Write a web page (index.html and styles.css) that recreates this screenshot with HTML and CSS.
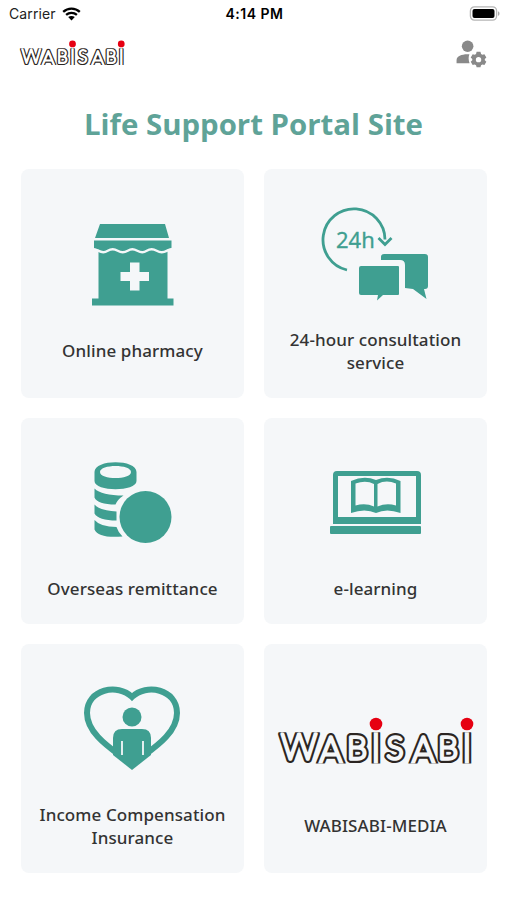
FILE: index.html
```html
<!DOCTYPE html>
<html lang="en">
<head>
<meta charset="utf-8">
<meta name="viewport" content="width=device-width">
<title>Life Support Portal Site</title>
<link rel="stylesheet" href="styles.css">
</head>
<body>
<div class="status">
  <div class="carrier"><span>Carrier</span>
    <svg width="19" height="14" viewBox="0 0 19 14"><path d="M1.2 4.9C5.8.6 13.2.6 17.8 4.9M4.1 7.9c3.1-2.8 7.7-2.8 10.8 0" fill="none" stroke="#000" stroke-width="2.3"/><path d="M6.2 10.1c1.9-1.6 4.7-1.6 6.6 0L9.5 13.5z"/></svg>
  </div>
  <div class="time">4:14 PM</div>
  <svg class="battery" width="31" height="16" viewBox="0 0 31 16"><rect x="1.4" y=".9" width="26.2" height="13.2" rx="4" fill="none" stroke="#b5b5b5" stroke-width="1.3"/><rect x="3.5" y="3" width="22" height="9" rx="2"/><path d="M29 5.2c2 .8 2 3.8 0 4.6z" fill="#aaa"/></svg>
</div>
<header class="header">
  <svg class="logo" width="105" height="26" viewBox="0 0 196 48">
    <clipPath id="band"><rect x="-5" y="15.300" width="206" height="31.200"/></clipPath>
    <g class="wordmark" clip-path="url(#band)">
      <text class="outer" x="3 41 69 92.300 108.500 133.500 160 183.300" y="42 46.500 42 48 42 46.500 42 48"><tspan class="w">W</tspan><tspan class="a">A</tspan>B<tspan class="i">I</tspan>S<tspan class="a">A</tspan>B<tspan class="i">I</tspan></text>
      <text class="inner header-inner" aria-hidden="true" x="3 41 69 92.300 108.500 133.500 160 183.300" y="42 46.500 42 48 42 46.500 42 48"><tspan class="w">W</tspan><tspan class="a">A</tspan>B<tspan class="i">I</tspan>S<tspan class="a">A</tspan>B<tspan class="i">I</tspan></text>
    </g>
    <circle cx="98" cy="7" r="6.3" fill="#e60012"/><circle cx="189" cy="7" r="6.3" fill="#e60012"/>
  </svg>
  <svg class="settings" width="31" height="27" viewBox="0 0 32 28" fill="#898989"><circle cx="12" cy="6.5" r="6"/><path d="M.5 24v-3.1c0-3.8 5.3-6 11-6h2.3c-1.1 3-1 6 .2 9.1z"/><path fill-rule="evenodd" d="m21.3 12.3h4l.6 2.2 1.4.8 2.1-.6 2 3.4-1.6 1.5v1.5l1.6 1.5-2 3.4-2.1-.6-1.4.8-.6 2.1h-4l-.6-2.1-1.4-.8-2.1.6-2-3.4 1.6-1.5v-1.5l-1.6-1.5 2-3.4 2.1.6 1.4-.8zm2 5.3a2.8 2.8 0 1 0 0 5.6 2.8 2.8 0 0 0 0-5.6"/></svg>
</header>
<main>
  <h1>Life Support Portal Site</h1>
  <div class="grid">
    <section class="card">
      <svg class="icon" width="100" height="100" viewBox="1 -3 100 100"><path d="M18 6h65l4 14H13zM12 22.500h77.500v9H85.500V80.500h6V87.500H10V80.500h6.500V31.500H12z"/><path class="wave" d="M10.500 31C15 31 17 34.300 21.300 34.300S26 31.300 30.700 31.300 36 34.300 40.700 34.300 46 31.300 50.300 31.300 56 34.300 60.300 34.300 65 31.300 69.700 31.300 75 34.300 79.700 34.300 86 31 90.500 31"/><path class="cut" d="M48 44.500h9.500v9.500h9.500v9h-9.500v9.500H48V63h-9.500v-9H48z"/></svg>
      <p>Online pharmacy</p>
    </section>
    <section class="card">
      <svg class="icon" width="110" height="100" viewBox="10 5 110 100"><path d="M36 71A31 31 0 1 1 74 40.500M67.500 39l6.500 6.500 6.500-6.500" fill="none" stroke="#3f9f91" stroke-width="2.8"/><text class="hours" x="25" y="49">24h</text><path d="M50 67h37q1 0 1 1v27q0 1-1 1H72l-6 5.500 1-5.500H50q-2 0-2-2V69q0-2 2-2M70 60v-2q0-3 3-3h41q3 0 3 3v29q0 3-3 3h-1l2.500 10L102 90l-8-1V66q0-5-5-5H70z"/></svg>
      <p>24-hour consultation<br>service</p>
    </section>
    <section class="card">
      <svg class="icon" width="100" height="100" viewBox=".5 3 100 100"><path fill-rule="evenodd" d="M12 22c0-13 42-13 42 0v9c0 11-42 11-42 0zm5.500 0c0 8 31 8 31 0s-31-8-31 0M12 38.500q7 7 29 7-6 4-8 9-18 0-21-7zM12 54.500q5 6 22 7v9q-18 0-22-7zM12 70q6 7 22 7 2 6 6 9.500-24 2-28-7z"/><circle cx="63" cy="67" r="26"/></svg>
      <p>Overseas remittance</p>
    </section>
    <section class="card">
      <svg class="icon" width="100" height="100" viewBox="0 3 100 100"><path fill-rule="evenodd" d="M11 21h80q4 0 4 4v49H7V25q0-4 4-4m1 5v41h78V26z"/><rect x="4" y="76" width="91" height="8" rx="1"/><path fill-rule="evenodd" d="M25 31q13-6 25-1 12-5 24.500 1v32q-14-5-24.500 0-11-5-25 0zm4.500 2.500v22q10-3 18.500 1V34q-8-4-18.500-.5m22 .5v22.500q9-4 18.500-1V33.500q-10-4-18.500.5"/></svg>
      <p>e-learning</p>
    </section>
    <section class="card">
      <svg class="icon" width="100" height="100" viewBox="1 0 100 100"><path d="M50 86C37 74 5 58 5 34 5 10 36 4 50 18 64 4 95 10 95 34 95 58 63 74 50 86z" fill="none" stroke="#3f9f91" stroke-width="6"/><circle cx="50" cy="38" r="9.500"/><path d="M31 76V59q0-9 9-9h20q9 0 9 9v17L50 91z"/><path d="M40 62v14M61 62v14" stroke="#f5f7f9" stroke-width="1.800"/></svg>
      <p>Income Compensation<br>Insurance</p>
    </section>
    <section class="card">
      <svg class="icon brand" width="196" height="100" viewBox="0 -27 196 100">
        <g class="wordmark" clip-path="url(#band)">
          <text class="outer" x="3 41 69 92.300 108.500 133.500 160 183.300" y="42 46.500 42 48 42 46.500 42 48"><tspan class="w">W</tspan><tspan class="a">A</tspan>B<tspan class="i">I</tspan>S<tspan class="a">A</tspan>B<tspan class="i">I</tspan></text>
          <text class="inner" aria-hidden="true" x="3 41 69 92.300 108.500 133.500 160 183.300" y="42 46.500 42 48 42 46.500 42 48"><tspan class="w">W</tspan><tspan class="a">A</tspan>B<tspan class="i">I</tspan>S<tspan class="a">A</tspan>B<tspan class="i">I</tspan></text>
        </g>
        <circle cx="98" cy="7" r="6.300" fill="#e60012"/><circle cx="189" cy="7" r="6.300" fill="#e60012"/>
      </svg>
      <p>WABISABI-MEDIA</p>
    </section>
  </div>
</main>
</body>
</html>
```
FILE: styles.css
```css
* { box-sizing: border-box; }
body { margin: 0; height: 900px; overflow: hidden; background: #fff; font-family: "Open Sans", sans-serif; color: #333; }
svg { display: block; flex: none; overflow: visible; }
.status { height: 27px; display: grid; grid-template-columns: 1fr auto 1fr; align-items: center; padding: 0 7px 0 9px; font-family: Inter, sans-serif; color: #222; }
.carrier { display: flex; align-items: center; gap: 6px; font-size: 14px; letter-spacing: .1px; }
.time { font-size: 14px; font-weight: 600; color: #000; letter-spacing: .5px; }
.battery { justify-self: end; }
.header { height: 53px; display: flex; justify-content: space-between; align-items: flex-start; padding: 13px 20px 0 20px; }
.wordmark text { font-family: "Lato Hairline", Lato, sans-serif; font-weight: 100; font-size: 32px; stroke-linejoin: round; }
.wordmark .w { font-size: 36px; }
.wordmark .a { font-size: 37px; }
.wordmark .i { font-size: 46px; }
.outer { fill: #2b2522; stroke: #2b2522; stroke-width: 8px; }
.inner { fill: #f5f7f9; stroke: #f5f7f9; stroke-width: 3.6px; }
.inner.header-inner { fill: #fff; stroke: #fff; }
h1 { margin: 24px 0; height: 41px; line-height: 41px; text-align: center; font-size: 29.4px; font-weight: 700; color: #5fa398; }
.grid { display: grid; grid-template-columns: 223px 223px; grid-template-rows: 229px 206px 229px; gap: 20px; padding-left: 21px; }
.card { border-radius: 8px; background: #f5f7f9; display: flex; flex-direction: column; align-items: center; justify-content: center; gap: 24px; padding-top: 10px; }
.icon { fill: #3f9f91; }
.cut { fill: #f5f7f9; }
.wave { fill: none; stroke: #f5f7f9; stroke-width: 2.4px; }
.hours { font-size: 22px; font-family: "Noto Sans", sans-serif; stroke: #3f9f91; stroke-width: .3px; }
.card p { margin: 0; text-align: center; font-family: "Noto Sans", "Open Sans", sans-serif; font-size: 17px; line-height: 23px; font-weight: 500; letter-spacing: .1px; color: #333; white-space: nowrap; }
```
